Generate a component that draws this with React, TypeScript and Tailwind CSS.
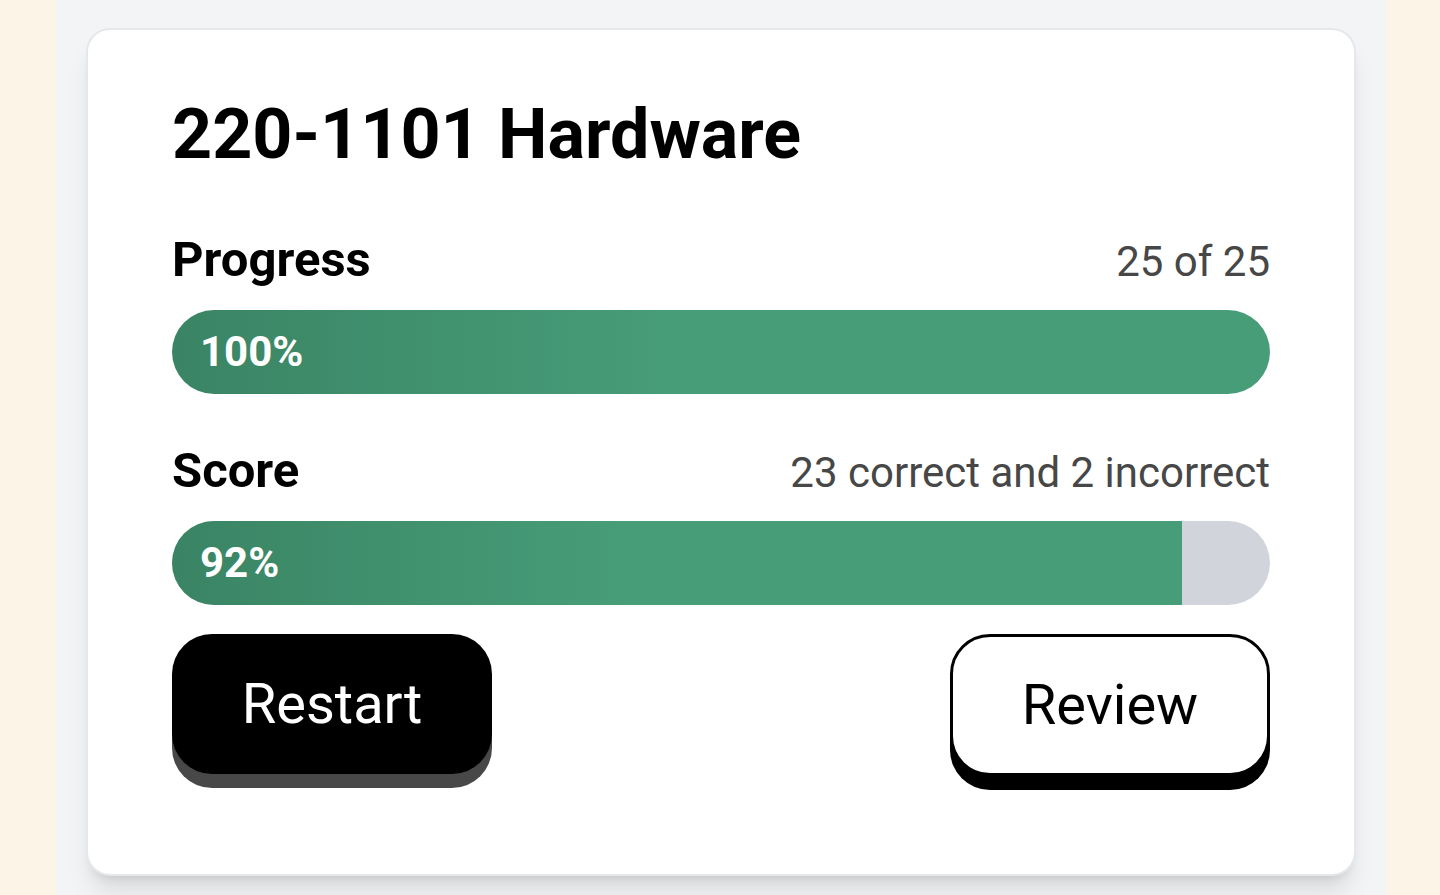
import React from "react";

function Bar({ pct }: { pct: number }) {
  return (
    <div className="h-[84px] w-full rounded-full bg-[#d1d5db] overflow-hidden">
      <div
        className="h-full flex items-center pl-[28px] bg-linear-to-r from-[#3a8464] to-[#479d78] to-[45%]"
        style={{ width: `${pct}%` }}
      >
        <span className="text-[42px] leading-none font-bold text-white">{pct}%</span>
      </div>
    </div>
  );
}

export default function App() {
  return (
    <div
      className="min-h-screen w-full bg-[#fcf4e7] flex pl-[56px]"
      style={{ fontFamily: "Roboto, 'Liberation Sans', sans-serif" }}
    >
      <div className="w-[1330px] min-h-screen bg-[#f3f4f6] px-[30px] pt-[28px] pb-[22px]">
        <div className="bg-white border-2 border-[#e5e7eb] rounded-[24px] shadow-xl px-[84px] pt-[69px] pb-[98px]">
          <h1 className="text-[70px] leading-none font-bold text-black">220-1101 Hardware</h1>

          <div className="mt-[67px] flex items-baseline justify-between">
            <span className="text-[49px] leading-[48px] font-bold text-black">Progress</span>
            <span className="text-[42px] leading-[48px] text-[#474747]">25 of 25</span>
          </div>
          <div className="mt-[24px]">
            <Bar pct={100} />
          </div>

          <div className="mt-[53px] flex items-baseline justify-between">
            <span className="text-[49px] leading-[48px] font-bold text-black">Score</span>
            <span className="text-[42px] leading-[48px] text-[#474747]">23 correct and 2 incorrect</span>
          </div>
          <div className="mt-[24px]">
            <Bar pct={92} />
          </div>

          <div className="mt-[29px] flex justify-between">
            <button className="w-[320px] h-[140px] rounded-[40px] bg-black text-white text-[56px] leading-none shadow-[0_14px_0_#484848] flex items-center justify-center">
              Restart
            </button>
            <button className="w-[320px] h-[142px] rounded-[40px] bg-white text-black border-[3px] border-black text-[56px] leading-none shadow-[0_14px_0_#000] flex items-center justify-center">
              Review
            </button>
          </div>
        </div>
      </div>
    </div>
  );
}
